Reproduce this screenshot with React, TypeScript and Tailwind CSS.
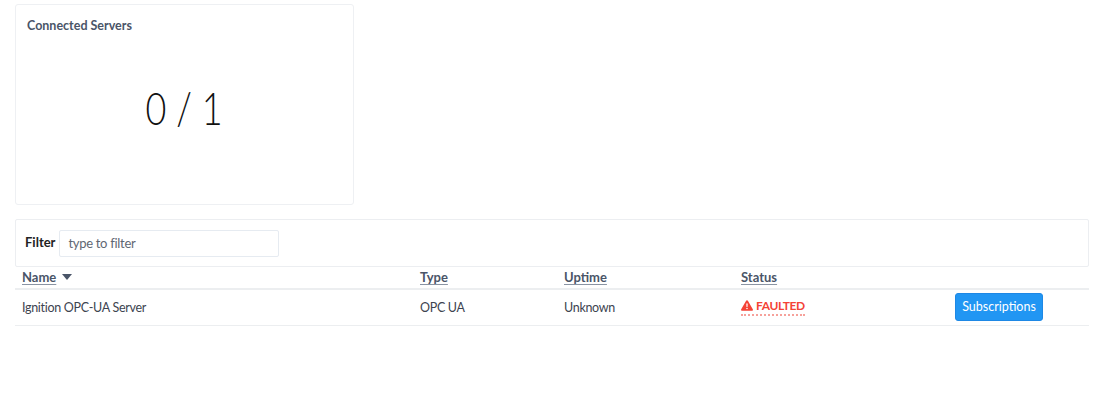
import React from 'react';

const Sort = () => (
  <svg width="10" height="6" viewBox="0 0 10 6" className="inline-block ml-[6px] mb-[3px]">
    <path d="M0 0h10L5 6z" fill="#4a5568" />
  </svg>
);

const Warn = () => (
  <svg width="12" height="11" viewBox="0 0 12 11" className="inline-block mr-[3px] mb-[2px]">
    <path fillRule="evenodd" d="M6 0.2c.4 0 .7.2.9.5l4.9 8.5c.4.7-.1 1.6-.9 1.6H1.1c-.8 0-1.3-.9-.9-1.600L5.100.7C5.300.4 5.600.2 6 .2zM5.300 3.500l.2 3.500h1l.2-3.500zM6 7.700a.8.8 0 1 0 0 1.600.8.8 0 0 0 0-1.600z" fill="#f44336" />
  </svg>
);

const thClass = "pl-[7px] text-left font-bold text-[13px] text-[#4a5568] underline underline-offset-2 decoration-[#8a94a3]";

export default function App() {
  return (
    <div className="bg-white h-[403px] w-[1107px] pl-[15px] pt-[4px] font-['Lato',sans-serif] text-[12.5px] tracking-[-0.3px] text-[#3d4450]">
      <div className="w-[339px] h-[201px] border border-[#eef0f3] rounded-[3px] flex flex-col">
        <h3 className="pl-[11px] pt-[12px] text-[12.5px] tracking-normal leading-[18px] font-bold text-[#4a5568]">Connected Servers</h3>
        <div className="flex-1 flex items-center justify-center pb-[23px]">
          <span className="inline-block scale-x-[0.8] font-light text-[45px] tracking-normal leading-none text-[#111]">0 / 1</span>
        </div>
      </div>

      <div className="mt-[14px] w-[1074px] h-[48px] border border-[#eceef1] rounded-[2px] flex items-center pl-[9px] gap-[4px]">
        <label className="text-[13px] tracking-normal font-bold text-[#222]">Filter</label>
        <input
          readOnly
          placeholder="type to filter"
          className="w-[220px] h-[27px] border border-[#e6ebf1] rounded-[2px] pl-[8px] text-[13px] placeholder:text-[#5f6773] outline-none"
        />
      </div>

      <table className="w-[1074px] table-fixed border-collapse">
        <colgroup>
          <col className="w-[398px]" />
          <col className="w-[144px]" />
          <col className="w-[177px]" />
          <col className="w-[214px]" />
          <col className="w-[141px]" />
        </colgroup>
        <thead>
          <tr className="h-[22px] border-b-2 border-[#eceef0] tracking-normal">
            <th className={thClass}><span>Name</span><Sort /></th>
            <th className={thClass}>Type</th>
            <th className={thClass}>Uptime</th>
            <th className={thClass}>Status</th>
            <th />
          </tr>
        </thead>
        <tbody>
          <tr className="h-[36px] border-b border-[#eceef0]">
            <td className="pl-[7px] pt-[2px]">Ignition OPC-UA Server</td>
            <td className="pl-[7px] pt-[2px]">OPC UA</td>
            <td className="pl-[7px] pt-[2px]">Unknown</td>
            <td className="pl-[7px] pb-[2px]">
              <span className="inline-block leading-[16px] font-bold text-[12px] tracking-[-0.4px] text-[#f44336] border-b-2 border-dotted border-[#f6a19b]">
                <Warn />FAULTED
              </span>
            </td>
            <td className="pl-[7px]">
              <button className="w-[88px] h-[28px] bg-[#2196f3] border border-[#1e88e5] rounded-[3px] text-white text-[12.5px] tracking-normal">Subscriptions</button>
            </td>
          </tr>
        </tbody>
      </table>
    </div>
  );
}
